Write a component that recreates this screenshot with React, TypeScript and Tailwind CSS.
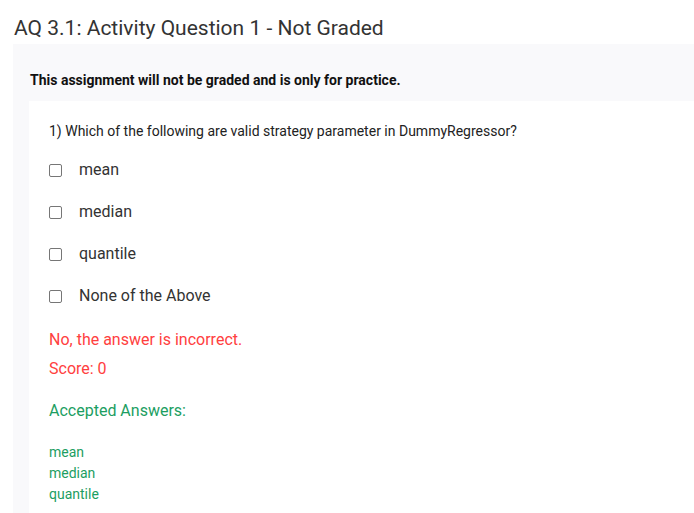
export default function App() {
  const options = ['mean', 'median', 'quantile', 'None of the Above']
  const accepted = ['mean', 'median', 'quantile']

  return (
    <div className="min-h-screen bg-white font-['Roboto',sans-serif] overflow-hidden">
      {/* title */}
      <div className="pt-[16px] pb-[4px] pl-[14px]">
        <h1 className="text-[21px] leading-[24px] text-[#333333]">AQ 3.1: Activity Question 1 - Not Graded</h1>
      </div>

      {/* assignment panel */}
      <div className="ml-[13px] bg-[#f9f9fb] pt-[28px]">
        <p className="pl-[17px] text-[14px] leading-[16px] font-bold text-[#111111] mb-[13px]">
          This assignment will not be graded and is only for practice.
        </p>

        <div className="ml-[16px] bg-white pl-[20px] pt-[22px] pb-[20px]">
          <p className="text-[14px] leading-[16px] text-[#222222]">
            1) Which of the following are valid strategy parameter in DummyRegressor?
          </p>

          <div className="mt-[10px]">
            {options.map(opt => (
              <label key={opt} className="flex items-center h-[42px]">
                <span className="w-[13px] h-[13px] border border-[#767676] rounded-[2px] bg-white flex-shrink-0" />
                <span className="ml-[17px] text-[16px] text-[#333333]">{opt}</span>
              </label>
            ))}
          </div>

          <div className="mt-[7.5px] text-[16px] leading-[29px] text-[#ff4040]">
            <p>No, the answer is incorrect.</p>
            <p>Score: 0</p>
          </div>

          <p className="mt-[18.5px] text-[16px] leading-[20px] text-[#1c9e62]">Accepted Answers:</p>

          <div className="mt-[20.5px] text-[14px] leading-[21px] text-[#1c9e62]">
            {accepted.map(a => (
              <p key={a}>{a}</p>
            ))}
          </div>
        </div>
      </div>
    </div>
  )
}
